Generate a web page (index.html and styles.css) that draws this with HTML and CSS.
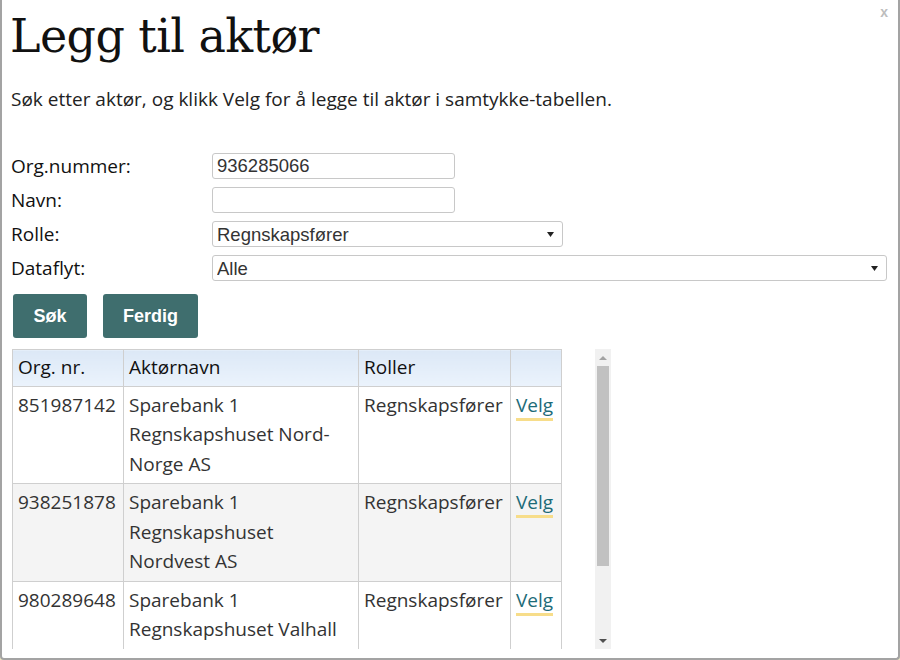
FILE: index.html
```html
<!DOCTYPE html>
<html lang="no">
<head>
    <meta charset="UTF-8">
    <title>Legg til aktør</title>
    <link rel="stylesheet" href="styles.css">
</head>
<body>
    <div class="dialog">
        <span class="close">x</span>
        <h1>Legg til aktør</h1>
        <p class="intro">Søk etter aktør, og klikk Velg for å legge til aktør i samtykke-tabellen.</p>

        <div class="form">
            <label for="orgnr">Org.nummer:</label>
            <div><input type="text" id="orgnr" class="short" value="936285066"></div>

            <label for="navn">Navn:</label>
            <div><input type="text" id="navn" class="short"></div>

            <label for="rolle">Rolle:</label>
            <div>
                <select id="rolle" class="medium">
                    <option>Regnskapsfører</option>
                </select>
            </div>

            <label for="dataflyt">Dataflyt:</label>
            <div>
                <select id="dataflyt" class="wide">
                    <option>Alle</option>
                </select>
            </div>
        </div>

        <div class="buttons">
            <button class="btn sok">Søk</button>
            <button class="btn ferdig">Ferdig</button>
        </div>

        <div class="results">
            <div class="table-wrap">
                <table>
                    <thead>
                        <tr>
                            <th class="c-org">Org. nr.</th>
                            <th class="c-navn">Aktørnavn</th>
                            <th class="c-rolle">Roller</th>
                            <th class="c-velg"></th>
                        </tr>
                    </thead>
                    <tbody>
                        <tr>
                            <td>851987142</td>
                            <td>Sparebank 1 Regnskapshuset Nord-Norge AS</td>
                            <td>Regnskapsfører</td>
                            <td><a href="#">Velg</a></td>
                        </tr>
                        <tr>
                            <td>938251878</td>
                            <td>Sparebank 1 Regnskapshuset Nordvest AS</td>
                            <td>Regnskapsfører</td>
                            <td><a href="#">Velg</a></td>
                        </tr>
                        <tr>
                            <td>980289648</td>
                            <td>Sparebank 1 Regnskapshuset Valhall AS</td>
                            <td>Regnskapsfører</td>
                            <td><a href="#">Velg</a></td>
                        </tr>
                    </tbody>
                </table>
            </div>
            <div class="scrollbar">
                <div class="arrow up"></div>
                <div class="track"><div class="thumb"></div></div>
                <div class="arrow down"></div>
            </div>
        </div>
    </div>
</body>
</html>
```

FILE: styles.css
```css
body {
    margin: 0;
    background: #ece6c4;
    font-family: "Open Sans", sans-serif;
    color: #222;
}

.dialog {
    position: relative;
    box-sizing: border-box;
    width: 900px;
    height: 660px;
    background: #fff;
    border: 2px solid #a3a3a3;
    border-top: none;
    border-radius: 0 0 4px 4px;
    padding: 0 10px 0 8px;
    overflow: hidden;
}

.close {
    position: absolute;
    top: 4px;
    right: 10px;
    font-family: "Liberation Sans", Arial, sans-serif;
    font-weight: bold;
    font-size: 14px;
    color: #bdbdbd;
}

h1 {
    font-family: "DejaVu Serif", serif;
    font-weight: normal;
    font-size: 46px;
    line-height: 1;
    margin: 13px 0 0 0;
    color: #111;
    letter-spacing: -0.6px;
}

.intro {
    font-size: 19px;
    margin: 27px 0 0 1px;
}

.form {
    display: grid;
    grid-template-columns: 202px 1fr;
    row-gap: 8px;
    margin-top: 41px;
    align-items: center;
}

.form label {
    font-size: 19px;
    padding-left: 1px;
    color: #111;
}

.form input,
.form select {
    box-sizing: border-box;
    height: 26px;
    border: 1px solid #c8c8c8;
    border-radius: 3px;
    font-family: "Liberation Sans", Arial, sans-serif;
    font-size: 18.5px;
    color: #333;
    padding: 0 4px;
    background: #fff;
    vertical-align: middle;
}

.form select {
    -webkit-appearance: none;
    appearance: none;
    padding-left: 4px;
    background-image: url("data:image/svg+xml;utf8,<svg xmlns='http://www.w3.org/2000/svg' width='8' height='7'><path d='M0 1h7l-3.5 5z' fill='%23222'/></svg>");
    background-repeat: no-repeat;
    background-position: right 7px center;
}

.short {
    width: 243px;
}

.medium {
    width: 351px;
}

.wide {
    width: 675px;
}

.buttons {
    display: flex;
    gap: 16px;
    margin: 13px 0 0 3px;
}

.btn {
    background: #3f6e6e;
    color: #fff;
    border: none;
    border-radius: 3px;
    height: 44px;
    font-family: "Liberation Sans", Arial, sans-serif;
    font-weight: bold;
    font-size: 18px;
}

.sok {
    width: 74px;
}

.ferdig {
    width: 95px;
}

.results {
    display: flex;
    margin-top: 11px;
    height: 300px;
}

.table-wrap {
    width: 583px;
    overflow: hidden;
    padding-left: 2px;
}

table {
    border-collapse: collapse;
    font-size: 19px;
    line-height: 29.5px;
}

th,
td {
    border: 1px solid #cfcfcf;
    padding: 4px 5px 4px 5px;
    text-align: left;
    vertical-align: top;
}

th {
    font-weight: normal;
    color: #111;
    background: linear-gradient(#dce8f6, #ebf3fc);
    padding: 3px 5px 3px 5px;
}

td {
    color: #333;
}

tbody tr:nth-child(even) td {
    background: #f4f4f4;
}

.c-org {
    width: 100px;
}

.c-navn {
    width: 224px;
}

.c-rolle {
    width: 141px;
}

.c-velg {
    width: 40px;
}

td a {
    color: #1d6b78;
    text-decoration: none;
    border-bottom: 3px solid #f7dd8a;
}

.scrollbar {
    width: 16px;
    background: #f1f1f1;
    display: flex;
    flex-direction: column;
}

.arrow {
    height: 17px;
    display: flex;
    align-items: center;
    justify-content: center;
}

.arrow::before {
    content: "";
    border-left: 4px solid transparent;
    border-right: 4px solid transparent;
}

.up::before {
    border-bottom: 4px solid #a3a3a3;
}

.down::before {
    border-top: 4px solid #505050;
}

.track {
    flex: 1;
    padding: 0 2px;
}

.thumb {
    height: 200px;
    background: #c1c1c1;
}
```
